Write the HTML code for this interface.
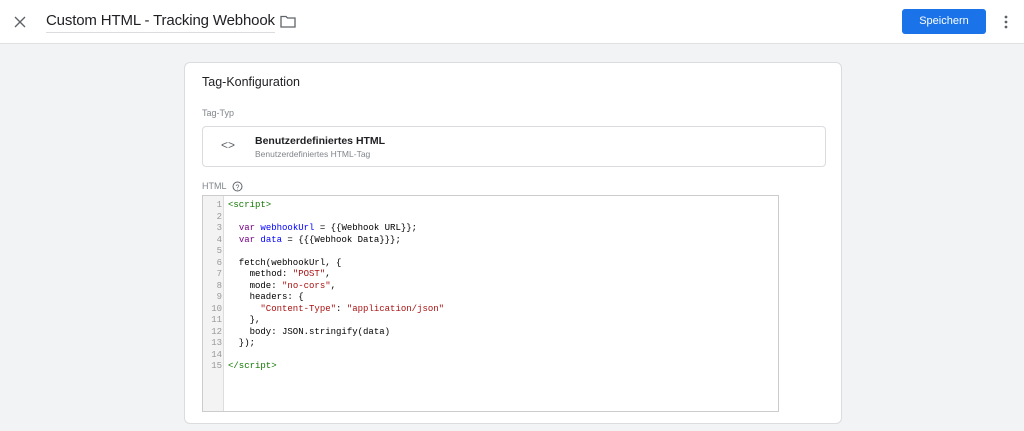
<!DOCTYPE html>
<html><head><meta charset="utf-8"><style>
*{box-sizing:border-box;margin:0;padding:0}
body{width:1024px;height:431px;background:#f1f3f4;font-family:"Liberation Sans",Arial,sans-serif;position:relative;overflow:hidden}
.hdr{position:absolute;left:0;top:0;width:1024px;height:44px;background:#fff;border-bottom:1px solid #e0e0e0}
.title{position:absolute;left:46px;top:12px;font-size:15px;letter-spacing:-0.15px;color:#202124;border-bottom:1px solid #dadce0;padding-bottom:3px;white-space:nowrap}
.btn{position:absolute;left:902px;top:9px;width:84px;height:25px;background:#1a73e8;border-radius:3px;color:#fff;font-size:11px;text-align:center;line-height:25px}
.card{position:absolute;left:184px;top:62px;width:658px;height:362px;background:#fff;border:1px solid #dadce0;border-radius:6px}
.code{position:absolute;left:202px;top:195px;width:577px;height:217px;border:1px solid #ccc;background:#fff}
.gut{position:absolute;left:0;top:0;width:21px;height:100%;background:#f3f3f3;border-right:1px solid #ddd}
pre{font-family:"Liberation Mono",monospace;font-size:9px;line-height:11.5px;position:absolute;top:4px}
.k{color:#770088}.v{color:#0000ff}.s{color:#aa1111}.t{color:#117700}
</style></head><body>
<div class="hdr">
<svg style="position:absolute;left:14px;top:16px" width="12" height="12" viewBox="0 0 12 12"><path d="M1 1L11 11M11 1L1 11" stroke="#5f6368" stroke-width="1.4"/></svg>
<div class="title">Custom HTML - Tracking Webhook</div>
<svg style="position:absolute;left:280px;top:15px" width="16" height="13" viewBox="0 0 16 13"><path d="M1 1.5h5l1.5 1.5H15v9H1z" fill="none" stroke="#5f6368" stroke-width="1.3"/></svg>
<div class="btn">Speichern</div>
<svg style="position:absolute;left:1004px;top:15px" width="4" height="15"><circle cx="2" cy="2" r="1.4" fill="#5f6368"/><circle cx="2" cy="7" r="1.4" fill="#5f6368"/><circle cx="2" cy="12" r="1.4" fill="#5f6368"/></svg>
</div>
<div class="card">
<div style="position:absolute;left:17px;top:12px;font-size:12.5px;color:#202124">Tag-Konfiguration</div>
<div style="position:absolute;left:17px;top:45px;font-size:9px;color:#80868b">Tag-Typ</div>
<div style="position:absolute;left:17px;top:63px;width:624px;height:41px;border:1px solid #dadce0;border-radius:4px">
<div style="position:absolute;left:18px;top:11px;font-size:12px;color:#5f6368">&lt;&gt;</div>
<div style="position:absolute;left:52px;top:8px;font-size:10.5px;font-weight:bold;color:#202124">Benutzerdefiniertes HTML</div>
<div style="position:absolute;left:52px;top:22px;font-size:8.5px;color:#80868b">Benutzerdefiniertes HTML-Tag</div>
</div>
<div style="position:absolute;left:17px;top:118px;font-size:9px;color:#80868b">HTML</div>
<svg style="position:absolute;left:47px;top:118px" width="11" height="11"><circle cx="5.5" cy="5.5" r="4.5" fill="none" stroke="#5f6368" stroke-width="1"/><text x="5.5" y="8.3" font-size="7" text-anchor="middle" fill="#5f6368" font-family="Liberation Sans">?</text></svg>
</div>
<div class="code">
<div class="gut"><pre style="left:0;width:19px;text-align:right;color:#999">1
2
3
4
5
6
7
8
9
10
11
12
13
14
15</pre></div>
<pre style="left:25px;color:#000"><span class="t">&lt;script&gt;</span>

  <span class="k">var</span> <span class="v">webhookUrl</span> = {{Webhook URL}};
  <span class="k">var</span> <span class="v">data</span> = {{{Webhook Data}}};

  fetch(webhookUrl, {
    method: <span class="s">"POST"</span>,
    mode: <span class="s">"no-cors"</span>,
    headers: {
      <span class="s">"Content-Type"</span>: <span class="s">"application/json"</span>
    },
    body: JSON.stringify(data)
  });

<span class="t">&lt;/script&gt;</span></pre>
</div>
</body></html>
